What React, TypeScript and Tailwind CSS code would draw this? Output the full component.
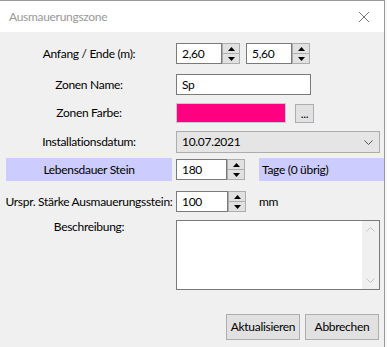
import React from "react";

const font = { fontFamily: 'Lato, "Liberation Sans", Arial, sans-serif' };

const Arrows: React.FC = () => (
  <div className="flex flex-col w-[18px] border border-[#adadad] bg-[#e1e1e1]">
    <div className="flex-1 flex items-center justify-center border-b border-[#adadad]">
      <svg width="7" height="4" viewBox="0 0 7 4"><path d="M3.5 0 L7 4 L0 4 Z" fill="#000" /></svg>
    </div>
    <div className="flex-1 flex items-center justify-center">
      <svg width="7" height="4" viewBox="0 0 7 4"><path d="M0 0 L7 0 L3.5 4 Z" fill="#000" /></svg>
    </div>
  </div>
);

const Spin: React.FC<{ value: string; w: string }> = ({ value, w }) => (
  <div className="flex h-[21px]">
    <div className={`${w} bg-white border border-[#7a7a7a] pl-[5px] flex items-center text-black`}>{value}</div>
    <Arrows />
  </div>
);

const Label: React.FC<{ children: React.ReactNode; className?: string }> = ({ children, className = "" }) => (
  <div className={`w-[166px] flex items-center justify-center whitespace-nowrap text-[#000] ${className}`}>{children}</div>
);

export default function App() {
  return (
    <div className="flex w-[387px] h-[347px] bg-[#f7f7f7] text-[12px] tracking-[-0.3px] text-black" style={font}>
      <div className="w-[385px] h-full border-r border-t border-[#9a9a9a] bg-[#f0f0f0] flex flex-col">
        <div className="h-[31px] bg-white flex items-center justify-between pl-[9px] pr-[14px]">
          <span className="text-[#999999] text-[12px]">Ausmauerungszone</span>
          <svg width="12" height="12" viewBox="0 0 12 12">
            <path d="M1 1 L11 11 M11 1 L1 11" stroke="#777" strokeWidth="1" />
          </svg>
        </div>

        <div className="flex flex-col pl-[6px]">
          <div className="flex items-center gap-[4px] mt-[11px] h-[21px]">
            <Label>Anfang / Ende (m):</Label>
            <div className="flex gap-[6px]">
              <Spin value="2,60" w="w-[46px]" />
              <Spin value="5,60" w="w-[46px]" />
            </div>
          </div>

          <div className="flex items-center gap-[4px] mt-[10px] h-[21px]">
            <Label>Zonen Name:</Label>
            <div className="w-[135px] h-[21px] bg-white border border-[#7a7a7a] pl-[5px] flex items-center">Sp</div>
          </div>

          <div className="flex items-center gap-[4px] mt-[8px] h-[20px]">
            <Label>Zonen Farbe:</Label>
            <div className="w-[110px] h-[20px] bg-[#ff0080] border border-[#c8c8c8]" />
            <div className="ml-[5px] w-[19px] h-[19px] bg-[#e1e1e1] border border-[#adadad] flex items-end justify-center pb-[2px] leading-none">...</div>
          </div>

          <div className="flex items-center gap-[4px] mt-[8px] h-[22px]">
            <Label>Installationsdatum:</Label>
            <div className="w-[204px] h-[22px] bg-[#e5e5e5] border border-[#adadad] pl-[5px] pr-[6px] flex items-center justify-between">
              <span>10.07.2021</span>
              <svg width="9" height="5" viewBox="0 0 9 5"><path d="M0.5 0.5 L4.5 4.5 L8.5 0.5" stroke="#555" fill="none" strokeWidth="1" /></svg>
            </div>
          </div>

          <div className="flex items-center gap-[4px] mt-[5px] h-[23px]">
            <Label className="h-[23px] bg-[#ccccff]">Lebensdauer Stein</Label>
            <Spin value="180" w="w-[51px]" />
            <div className="ml-[10px] w-[125px] h-[23px] bg-[#ccccff] pl-[3px] flex items-center">Tage (0 übrig)</div>
          </div>

          <div className="flex items-center gap-[4px] mt-[10px] h-[21px]">
            <Label>Urspr. Stärke Ausmauerungsstein:</Label>
            <Spin value="100" w="w-[52px]" />
            <span className="ml-[9px]">mm</span>
          </div>

          <div className="flex items-start gap-[4px] mt-[8px]">
            <Label className="leading-[16px] -mt-[1px]">Beschreibung:</Label>
            <div className="w-[204px] h-[70px] bg-white border border-[#7a7a7a] flex justify-end">
              <div className="w-[17px] h-full bg-[#f0f0f0] flex flex-col items-center justify-between py-[6px]">
                <svg width="9" height="5" viewBox="0 0 9 5"><path d="M0.5 4.5 L4.5 0.5 L8.5 4.5" stroke="#c2c2c2" fill="none" /></svg>
                <svg width="9" height="5" viewBox="0 0 9 5"><path d="M0.5 0.5 L4.5 4.5 L8.5 0.5" stroke="#c2c2c2" fill="none" /></svg>
              </div>
            </div>
          </div>

          <div className="flex justify-end gap-[5px] mt-[24px] pr-[5px]">
            <div className="w-[74px] h-[26px] bg-[#e1e1e1] border border-[#adadad] flex items-center justify-center">Aktualisieren</div>
            <div className="w-[74px] h-[26px] bg-[#e1e1e1] border border-[#adadad] flex items-center justify-center">Abbrechen</div>
          </div>
        </div>
      </div>
    </div>
  );
}
